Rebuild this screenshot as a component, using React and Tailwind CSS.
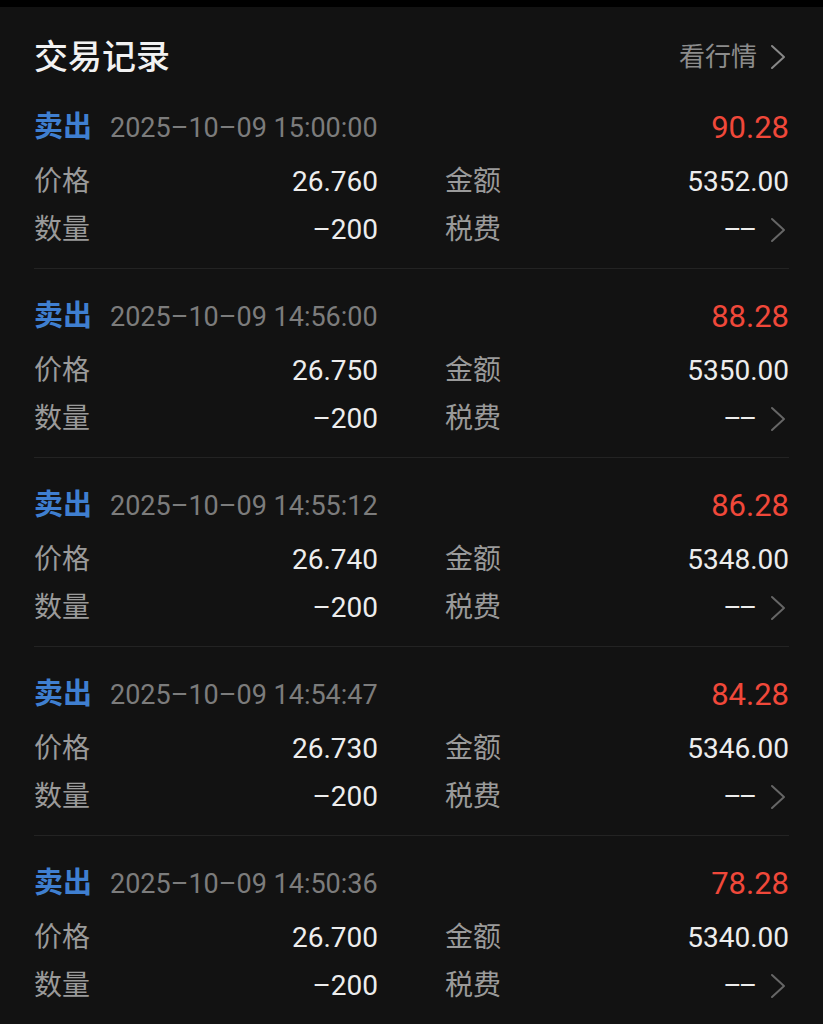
import React from "react";

// 交易记录 — 成交明细列表
const records = [
  { time: "2025-10-09 15:00:00", amount: "90.28", price: "26.760", total: "5352.00" },
  { time: "2025-10-09 14:56:00", amount: "88.28", price: "26.750", total: "5350.00" },
  { time: "2025-10-09 14:55:12", amount: "86.28", price: "26.740", total: "5348.00" },
  { time: "2025-10-09 14:54:47", amount: "84.28", price: "26.730", total: "5346.00" },
  { time: "2025-10-09 14:50:36", amount: "78.28", price: "26.700", total: "5340.00" },
];

const font = { fontFamily: "Roboto, 'Noto Sans CJK SC', sans-serif" };

function Chevron({ className = "", color = "#666" }) {
  return (
    <svg className={className} width="16" height="26" viewBox="0 0 16 26" fill="none">
      <path d="M2 2 L14 13 L2 24" stroke={color} strokeWidth="2" strokeLinecap="round" strokeLinejoin="round" />
    </svg>
  );
}

function Cell({ label, value, children }) {
  return (
    <div className="flex items-center justify-between h-[48px]">
      <span className="text-[28px] text-[#9a9a9a]">{label}</span>
      <span className="flex items-center text-[28px] text-[#ededed]">
        {value}
        {children}
      </span>
    </div>
  );
}

function Record({ r }) {
  return (
    <div>
      <div className="flex items-center h-[48px]">
        <span className="text-[29px] font-bold text-[#3f7fd0]">卖出</span>
        <span className="ml-[18px] text-[27px] text-[#7c7c7c]">{r.time.replace(/-/g, "\u2013")}</span>
        <span className="ml-auto text-[31px] text-[#f0483a]">{r.amount}</span>
      </div>
      <div className="mt-[6px] grid grid-cols-2 gap-x-[67px]">
        <Cell label="价格" value={r.price} />
        <Cell label="金额" value={r.total} />
        <Cell label="数量" value={"\u2013200"} />
        <Cell label="税费" value={<span className="tracking-[-3px]">{"\u2013\u2013"}</span>}>
          <Chevron className="ml-[16px] mr-[3px]" />
        </Cell>
      </div>
    </div>
  );
}

export default function App() {
  return (
    <div className="min-h-[1024px] bg-[#121212]" style={font}>
      <div className="h-[7px] bg-black" />
      <div className="px-[34px]">
        <div className="flex items-center justify-between h-[97px] pt-[3px]">
          <h1 className="text-[34px] font-medium text-[#f2f2f2]">交易记录</h1>
          <div className="flex items-center text-[26px] text-[#8c8c8c]">
            看行情
            <Chevron className="ml-[13px] mr-[3px]" color="#888" />
          </div>
        </div>
        {records.map((r, i) => (
          <div key={i}>
            <Record r={r} />
            {i < records.length - 1 && <div className="mt-[14px] mb-[24px] h-px bg-[#232323]" />}
          </div>
        ))}
      </div>
    </div>
  );
}
